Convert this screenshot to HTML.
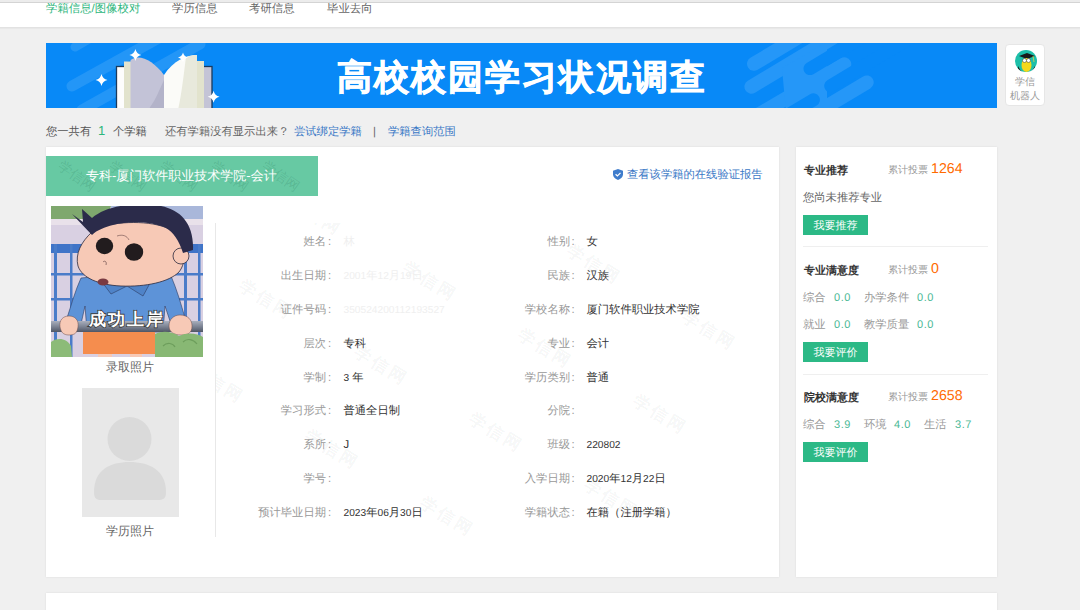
<!DOCTYPE html>
<html><head><meta charset="utf-8">
<style>
*{margin:0;padding:0;box-sizing:border-box}
html,body{width:1080px;height:610px;overflow:hidden;background:#f0f0f0;font-family:"Liberation Sans",sans-serif;font-size:12px;color:#333;text-rendering:geometricPrecision}
.abs{position:absolute;white-space:nowrap}
#topstrip{position:absolute;left:0;top:0;width:1080px;height:3px;background:#ececec;border-bottom:1px solid #d4d4d4;z-index:2}
#nav{position:absolute;left:0;top:2px;width:1080px;height:26px;background:#fff;border-bottom:1px solid #e2e2e2;box-shadow:0 1px 1px rgba(0,0,0,0.03)}
.nav{position:absolute;top:-1.5px;font-size:11.4px;line-height:16px;color:#666}
#banner{position:absolute;left:46px;top:43px;width:951px;height:65px;background:#0889f7;overflow:hidden}
#title{position:absolute;left:337px;top:54px;font-size:35px;line-height:48px;font-weight:bold;color:#fff;letter-spacing:2px;-webkit-text-stroke:0.7px #fff}
#robot{position:absolute;left:1005px;top:43.5px;width:40px;height:62px;background:#fff;border:1px solid #e6e6e6;border-radius:4px}
.card{position:absolute;background:#fff;box-shadow:0 0 2px rgba(0,20,10,0.09)}
.lbl{position:absolute;color:#999;text-align:right;font-size:11.3px;line-height:16px}
.colon{position:absolute;width:6px;text-align:center;color:#999;font-size:11.3px;line-height:16px}
.dg{font-size:10.2px}
.val{position:absolute;color:#333;font-size:11.3px;line-height:16px;white-space:nowrap}
.btn{position:absolute;left:8px;width:65px;height:20px;background:#2cb986;color:#fff;font-size:11px;line-height:23px;text-align:center;overflow:hidden}
.sh{position:absolute;left:8px;font-weight:bold;color:#333;font-size:11px;line-height:14px}
.sv{position:absolute;left:92px;color:#999;font-size:10px;line-height:14px}
.sn{position:absolute;left:135px;color:#ff6a00;font-size:14.2px;line-height:16px}
.sg{position:absolute;color:#999;font-size:11.3px;line-height:14px}
.sd{position:absolute;color:#4bb996;font-size:11px;line-height:14px;letter-spacing:0.6px;font-family:"Liberation Sans",sans-serif}
.hr{position:absolute;left:8px;width:185px;height:1px;background:#efefef}
.faint{color:#efefef}
.wm{position:absolute;width:80px;height:24px;line-height:24px;text-align:center;color:rgba(0,40,40,0.05);font-size:17px;font-weight:bold;letter-spacing:3px;transform:rotate(31deg);white-space:nowrap}
.wmt{position:absolute;width:60px;height:20px;line-height:20px;text-align:center;color:rgba(0,70,40,0.13);font-size:14px;letter-spacing:0px;transform:rotate(35deg);white-space:nowrap}
</style></head><body>
<div id="topstrip"></div>
<div id="nav">
  <div class="nav" style="left:46px;color:#2db67c">学籍信息/图像校对</div>
  <div class="nav" style="left:172px">学历信息</div>
  <div class="nav" style="left:249px">考研信息</div>
  <div class="nav" style="left:327px">毕业去向</div>
</div>

<div id="banner">
<svg width="951" height="65" viewBox="46 43 951 65" style="position:absolute;left:0;top:0">
<g stroke="#ffffff" stroke-opacity="0.11" stroke-width="11" stroke-linecap="round" fill="none">
 <path d="M75,47 L110,27" stroke-width="9"/>
 <path d="M72,86 L166,34"/>
 <path d="M82,110 L200,44"/>
</g>
<g stroke="#2597f8" stroke-width="14" stroke-linecap="round" fill="none">
 <path d="M754,63.8 L830,18.2"/>
 <path d="M751.4,86.7 L880,9.5"/>
 <path d="M700,148.9 L844.3,64.3"/>
 <path d="M720,170.4 L866.7,82.4"/>
</g>
<path d="M782,68.3 L827,41.5 L827,112 L786,112Z" fill="#2597f8"/>
<g stroke="#0889f7" stroke-width="13" stroke-linecap="round" fill="none">
 <path d="M810,68.6 L920,2.6"/>
 <path d="M830.7,85.8 L940,20"/>
 <path d="M813.4,99.8 L700,167.6"/>
</g>
<!-- book -->
<rect x="116.5" y="66.5" width="9" height="45" fill="#fdfdfd" stroke="#1b3a5c" stroke-width="1.3"/>
<rect x="203" y="66.5" width="9" height="45" fill="#c4c4d6" stroke="#1b3a5c" stroke-width="1.3"/>
<rect x="124" y="61.5" width="7" height="50" fill="#e2e3cd"/>
<rect x="197" y="61" width="7" height="50" fill="#e2e3cd"/>
<path d="M130.5,60 C139,53 154,61 164,75 L164,110 L130.5,110Z" fill="#c3c3d7"/>
<path d="M148,110 C156,100 160,88 164,80 L164,110Z" fill="#b3b3c9"/>
<path d="M164,75 C173,61 186,55 197,55 L197,110 L164,110Z" fill="#fbfbf8"/>
<path d="M186,57 C190,55.5 194,55 197,55 L197,110 L178,110 C182,92 184,72 186,57Z" fill="#e8e9dc"/>
<path d="M135.4,49 Q136.48000000000002,53.92 141.4,55 Q136.48000000000002,56.08 135.4,61 Q134.32,56.08 129.4,55 Q134.32,53.92 135.4,49Z" fill="#fff"/><path d="M101.5,74 Q102.58,78.92 107.5,80 Q102.58,81.08 101.5,86 Q100.42,81.08 95.5,80 Q100.42,78.92 101.5,74Z" fill="#fff"/><path d="M183,52.5 Q183.9,56.6 188,57.5 Q183.9,58.4 183,62.5 Q182.1,58.4 178,57.5 Q182.1,56.6 183,52.5Z" fill="#fff"/><path d="M213.6,90.7 Q214.68,95.62 219.6,96.7 Q214.68,97.78 213.6,102.7 Q212.51999999999998,97.78 207.6,96.7 Q212.51999999999998,95.62 213.6,90.7Z" fill="#fff"/>
</svg>
</div>
<div id="title" class="abs">高校校园学习状况调查</div>

<div id="robot">
  <div style="position:absolute;left:8.5px;top:5px;width:22px;height:22px;border-radius:50%;background:#1dbfa9;overflow:hidden">
<svg width="23" height="23" viewBox="0 0 23 23">
<path d="M4,6 L12,3 L20,6 L12,9Z" fill="#1a1a1a"/>
<path d="M18,6 L19,12" stroke="#e8d040" stroke-width="0.8"/>
<ellipse cx="11.5" cy="15" rx="5" ry="7" fill="#f4d81c"/>
<circle cx="9.5" cy="10.5" r="2" fill="#fff" stroke="#333" stroke-width="0.5"/>
<circle cx="13.5" cy="10.5" r="2" fill="#fff" stroke="#333" stroke-width="0.5"/>
<path d="M3,16 C5,20 7,22 9,23 L3,23Z" fill="#1a1a1a"/>
<path d="M20,16 C18,20 16,22 14,23 L20,23Z" fill="#1a1a1a"/>
<path d="M9,22 H14 V23 H9Z" fill="#e04040"/>
</svg></div>
  <div style="position:absolute;left:0;top:31px;width:38px;text-align:center;font-size:10px;line-height:14px;color:#9a9a9a">学信<br>机器人</div>
</div>

<div class="abs" style="left:46px;top:123.5px;font-size:11.3px;line-height:16px;color:#555">您一共有</div><div class="abs" style="left:98px;top:122.5px;font-size:13px;line-height:16px;color:#2db67c">1</div><div class="abs" style="left:113px;top:123.5px;font-size:11.3px;line-height:16px;color:#555">个学籍</div>
<div class="abs" style="left:165px;top:123.5px;font-size:11.3px;line-height:16px;color:#666">还有学籍没有显示出来？</div><div class="abs" style="left:294px;top:123.5px;font-size:11.3px;line-height:16px;color:#3a78c6">尝试绑定学籍</div><div class="abs" style="left:373px;top:123.5px;font-size:11.3px;line-height:16px;color:#666">|</div><div class="abs" style="left:388px;top:123.5px;font-size:11.3px;line-height:16px;color:#3a78c6">学籍查询范围</div>

<!-- main card -->
<div class="card" style="left:46px;top:147px;width:733px;height:430px;overflow:hidden">
  <div style="position:absolute;left:0;top:9px;width:272px;height:40px;background:#67c9a3"></div>
<div class="wmt" style="left:1px;top:19px">学信网</div>
<div class="wmt" style="left:52px;top:19px">学信网</div>
<div class="wmt" style="left:103px;top:19px">学信网</div>
<div class="wmt" style="left:154px;top:19px">学信网</div>
<div class="wmt" style="left:205px;top:19px">学信网</div>
<div style="position:absolute;left:169px;top:76px;width:564px;height:314px;overflow:hidden">
<div class="wm" style="left:60.4px;top:-19.5px">学信网</div>
<div class="wm" style="left:11.4px;top:64.5px">学信网</div>
<div class="wm" style="left:175.4px;top:47.0px">学信网</div>
<div class="wm" style="left:339.4px;top:29.5px">学信网</div>
<div class="wm" style="left:-37.6px;top:148.5px">学信网</div>
<div class="wm" style="left:126.4px;top:131.0px">学信网</div>
<div class="wm" style="left:290.4px;top:113.5px">学信网</div>
<div class="wm" style="left:454.4px;top:96.0px">学信网</div>
<div class="wm" style="left:77.4px;top:215.0px">学信网</div>
<div class="wm" style="left:241.4px;top:197.5px">学信网</div>
<div class="wm" style="left:405.4px;top:180.0px">学信网</div>
<div class="wm" style="left:192.4px;top:281.5px">学信网</div>
<div class="wm" style="left:356.4px;top:264.0px">学信网</div>
</div>
  <div class="abs" style="left:40px;top:20px;color:#fff;font-size:13px;line-height:17px">专科-厦门软件职业技术学院-会计</div>
  <div class="abs" style="left:567px;top:22px;width:10px;height:11px"><svg width="10" height="11" viewBox="0 0 10 11"><path d="M5,0 L10,1.8 V5.2 C10,8 7.8,10 5,11 C2.2,10 0,8 0,5.2 V1.8Z" fill="#3f7ccc"/><path d="M2.6,5.3 L4.4,7 L7.5,3.8" stroke="#fff" stroke-width="1.2" fill="none"/></svg></div>
  <div class="abs" style="left:581px;top:19.5px;color:#3a78c6;font-size:11.3px;line-height:16px">查看该学籍的在线验证报告</div>

  <div style="position:absolute;left:5px;top:59px;width:152px;height:151px;overflow:hidden">
<svg width="152" height="151" viewBox="0 0 152 151">
<rect width="152" height="151" fill="#d9d0e2"/>
<path d="M0,0 H60 C58,8 50,12 40,13 H0Z" fill="#7fa86e"/>

<rect x="60" y="0" width="92" height="14" fill="#a9b7da"/>
<rect x="0" y="13" width="152" height="6" fill="#e9e1ea"/>
<rect x="0" y="38" width="152" height="9" fill="#3f74c8"/>
<rect x="0" y="67" width="152" height="2.5" fill="#4a7cc9"/>
<rect x="0" y="92" width="152" height="2.5" fill="#4a7cc9"/>
<rect x="3" y="38" width="3" height="113" fill="#4a7cc9"/>
<rect x="19" y="38" width="2.5" height="113" fill="#4a7cc9"/>
<rect x="133" y="38" width="3" height="113" fill="#4a7cc9"/>
<rect x="147" y="38" width="2.5" height="113" fill="#4a7cc9"/>
<!-- shirt -->
<path d="M30,72 C24,85 20,100 16,112 L30,118 L34,100 L36,126 L112,126 L114,100 L120,118 L134,112 C130,98 126,84 120,70 L100,66 L52,70Z" fill="#5d93d8" stroke="#2b3a62" stroke-width="0.6"/>
<path d="M48,72 L60,88 L76,80 L92,90 L104,68Z" fill="#4f83c8" stroke="#2b3a62" stroke-width="0.6"/>
<!-- head -->
<path d="M41,26 C30,36 24,48 27,60 C31,72 48,79 70,80 C95,81 118,76 128,66 C136,56 134,40 128,30 C118,18 90,14 62,18 C52,20 46,22 41,26Z" fill="#f7c9b6" stroke="#2b2a3e" stroke-width="0.8"/>
<circle cx="130" cy="50" r="8" fill="#f7c9b6" stroke="#2b2a3e" stroke-width="0.8"/>
<!-- hair -->
<path d="M41,29 L21,8 L32,16 L31,3 L41,12 C55,0 80,-4 110,0 C130,4 143,18 142,44 L132,47 C128,34 122,26 115,22 C100,15 78,15 62,19 C54,21 46,24 41,29Z" fill="#2b2b4a"/>
<!-- eyes -->
<ellipse cx="53.5" cy="40" rx="8.7" ry="8.3" fill="#221c1e"/>
<ellipse cx="83" cy="46" rx="9.2" ry="8.8" fill="#221c1e"/>
<path d="M66,30 C72,28 76,30 78,34" stroke="#6a4a4a" stroke-width="0.6" fill="none"/>
<path d="M52,56 C54,54 56,56 55,59" stroke="#6a4a4a" stroke-width="0.7" fill="none"/>
<ellipse cx="52" cy="76" rx="5.5" ry="3.5" fill="#7a3a42"/>
<!-- rail -->
<defs><linearGradient id="rg" x1="0" y1="0" x2="0" y2="1"><stop offset="0" stop-color="#a9afbd"/><stop offset="0.5" stop-color="#7d8494"/><stop offset="1" stop-color="#4f5666"/></linearGradient></defs>
<rect x="0" y="115" width="152" height="11" fill="url(#rg)"/>
<!-- hands -->
<path d="M9,121 C8,114 12,110 18,110 C24,110 28,114 27,121 C26,127 24,129 18,129 C12,129 10,126 9,121Z" fill="#f7c9b6" stroke="#6a4a4a" stroke-width="0.5"/>
<path d="M118,120 C118,113 123,109 129,109 C137,109 141,114 141,120 C141,127 137,129 130,129 C123,129 118,126 118,120Z" fill="#f7c9b6" stroke="#6a4a4a" stroke-width="0.5"/>
<!-- shorts & legs -->
<rect x="47" y="146" width="14" height="5" fill="#f7c9b6"/>
<rect x="79" y="146" width="12" height="5" fill="#f7c9b6"/>
<rect x="32" y="126" width="72" height="22" fill="#f58d4e"/>
<path d="M0,151 V136 C6,131 16,132 20,140 L21,151Z" fill="#8cbb78"/>
<path d="M104,151 V128 C112,124 122,126 128,130 C136,126 146,127 152,131 V151Z" fill="#88b874"/>
<path d="M112,140 C116,136 122,137 124,141 M132,136 C136,132 142,133 146,138" stroke="#6d9e5c" stroke-width="1.2" fill="none"/>
<text x="76" y="118.5" text-anchor="middle" font-size="17" font-weight="bold" fill="#fff" stroke="#3a3a3a" stroke-width="1.6" paint-order="stroke" font-family="Liberation Serif, serif" letter-spacing="2">成功上岸</text>
</svg></div>
  <div class="abs" style="left:0;top:212px;width:168px;text-align:center;color:#666;font-size:12px;line-height:16px">录取照片</div>
  <div style="position:absolute;left:36px;top:241px;width:97px;height:129px;background:#e8e8e8;overflow:hidden">
<svg width="97" height="129" viewBox="0 0 97 129"><circle cx="47.5" cy="51" r="22" fill="#dadada"/><path d="M12,104 C12,82 28,74 47.5,74 C67,74 84,82 84,104 C84,110 82,112 76,112 H19 C14,112 12,110 12,104Z" fill="#dadada"/></svg></div>
  <div class="abs" style="left:0;top:376px;width:168px;text-align:center;color:#666;font-size:12px;line-height:16px">学历照片</div>
  <div style="position:absolute;left:169px;top:76px;width:1px;height:314px;background:#e8e8e8"></div>
</div>

<!-- fields -->
<div class="lbl" style="left:186px;width:140px;top:234.1px">姓名</div><div class="val faint" style="left:343.5px;top:234.1px">林</div><div class="colon" style="left:326.5px;top:234.1px">:</div>
<div class="lbl" style="left:430px;width:140px;top:234.1px">性别</div><div class="colon" style="left:570px;top:234.1px">:</div>
<div class="val" style="left:586.5px;top:234.1px">女</div>
<div class="lbl" style="left:186px;width:140px;top:267.9px">出生日期</div><div class="colon" style="left:326.5px;top:267.9px">:</div>
<div class="val faint" style="left:343.5px;top:267.9px"><span class="dg">2001</span>年<span class="dg">12</span>月<span class="dg">19</span>日</div>
<div class="lbl" style="left:430px;width:140px;top:267.9px">民族</div><div class="colon" style="left:570px;top:267.9px">:</div>
<div class="val" style="left:586.5px;top:267.9px">汉族</div>
<div class="lbl" style="left:186px;width:140px;top:301.8px">证件号码</div><div class="colon" style="left:326.5px;top:301.8px">:</div>
<div class="val faint" style="left:343.5px;top:301.8px"><span class="dg">350524200112193527</span></div>
<div class="lbl" style="left:430px;width:140px;top:301.8px">学校名称</div><div class="colon" style="left:570px;top:301.8px">:</div>
<div class="val" style="left:586.5px;top:301.8px">厦门软件职业技术学院</div>
<div class="lbl" style="left:186px;width:140px;top:335.6px">层次</div><div class="colon" style="left:326.5px;top:335.6px">:</div>
<div class="val" style="left:343.5px;top:335.6px">专科</div>
<div class="lbl" style="left:430px;width:140px;top:335.6px">专业</div><div class="colon" style="left:570px;top:335.6px">:</div>
<div class="val" style="left:586.5px;top:335.6px">会计</div>
<div class="lbl" style="left:186px;width:140px;top:369.5px">学制</div><div class="colon" style="left:326.5px;top:369.5px">:</div>
<div class="val" style="left:343.5px;top:369.5px"><span class="dg">3</span> 年</div>
<div class="lbl" style="left:430px;width:140px;top:369.5px">学历类别</div><div class="colon" style="left:570px;top:369.5px">:</div>
<div class="val" style="left:586.5px;top:369.5px">普通</div>
<div class="lbl" style="left:186px;width:140px;top:403.4px">学习形式</div><div class="colon" style="left:326.5px;top:403.4px">:</div>
<div class="val" style="left:343.5px;top:403.4px">普通全日制</div>
<div class="lbl" style="left:430px;width:140px;top:403.4px">分院</div><div class="colon" style="left:570px;top:403.4px">:</div>
<div class="lbl" style="left:186px;width:140px;top:437.2px">系所</div><div class="colon" style="left:326.5px;top:437.2px">:</div>
<div class="val" style="left:343.5px;top:437.2px">J</div>
<div class="lbl" style="left:430px;width:140px;top:437.2px">班级</div><div class="colon" style="left:570px;top:437.2px">:</div>
<div class="val" style="left:586.5px;top:437.2px"><span class="dg">220802</span></div>
<div class="lbl" style="left:186px;width:140px;top:471.1px">学号</div><div class="colon" style="left:326.5px;top:471.1px">:</div>
<div class="lbl" style="left:430px;width:140px;top:471.1px">入学日期</div><div class="colon" style="left:570px;top:471.1px">:</div>
<div class="val" style="left:586.5px;top:471.1px"><span class="dg">2020</span>年<span class="dg">12</span>月<span class="dg">22</span>日</div>
<div class="lbl" style="left:186px;width:140px;top:504.9px">预计毕业日期</div><div class="colon" style="left:326.5px;top:504.9px">:</div>
<div class="val" style="left:343.5px;top:504.9px"><span class="dg">2023</span>年<span class="dg">06</span>月<span class="dg">30</span>日</div>
<div class="lbl" style="left:430px;width:140px;top:504.9px">学籍状态</div><div class="colon" style="left:570px;top:504.9px">:</div>
<div class="val" style="left:586.5px;top:504.9px">在籍（注册学籍）</div>
<!-- sidebar -->
<div class="card" style="left:796px;top:147px;width:201px;height:430px">
  <div class="sh" style="left:8px;top:17px">专业推荐</div>
  <div class="sv" style="top:17px">累计投票</div>
  <div class="sn" style="top:14px">1264</div>
  <div class="sg" style="left:7px;top:44px;color:#666">您尚未推荐专业</div>
  <div class="btn" style="left:7px;top:68px">我要推荐</div>
  <div class="hr" style="left:7px;top:99px"></div>

  <div class="sh" style="left:8px;top:117px">专业满意度</div>
  <div class="sv" style="top:117px">累计投票</div>
  <div class="sn" style="top:114px">0</div>
  <div class="sg" style="left:7px;top:144px">综合</div>
  <div class="sd" style="left:38px;top:144px">0.0</div>
  <div class="sg" style="left:68px;top:144px">办学条件</div>
  <div class="sd" style="left:121px;top:144px">0.0</div>
  <div class="sg" style="left:7px;top:171px">就业</div>
  <div class="sd" style="left:38px;top:171px">0.0</div>
  <div class="sg" style="left:68px;top:171px">教学质量</div>
  <div class="sd" style="left:121px;top:171px">0.0</div>
  <div class="btn" style="left:7px;top:195px">我要评价</div>
  <div class="hr" style="left:7px;top:227px"></div>

  <div class="sh" style="left:8px;top:244px">院校满意度</div>
  <div class="sv" style="top:244px">累计投票</div>
  <div class="sn" style="top:241px">2658</div>
  <div class="sg" style="left:7px;top:271px">综合</div>
  <div class="sd" style="left:38px;top:271px">3.9</div>
  <div class="sg" style="left:68px;top:271px">环境</div>
  <div class="sd" style="left:98px;top:271px">4.0</div>
  <div class="sg" style="left:128px;top:271px">生活</div>
  <div class="sd" style="left:159px;top:271px">3.7</div>
  <div class="btn" style="left:7px;top:295px">我要评价</div>
</div>

<!-- bottom card -->
<div class="card" style="left:46px;top:593px;width:951px;height:40px"></div>
</body></html>
